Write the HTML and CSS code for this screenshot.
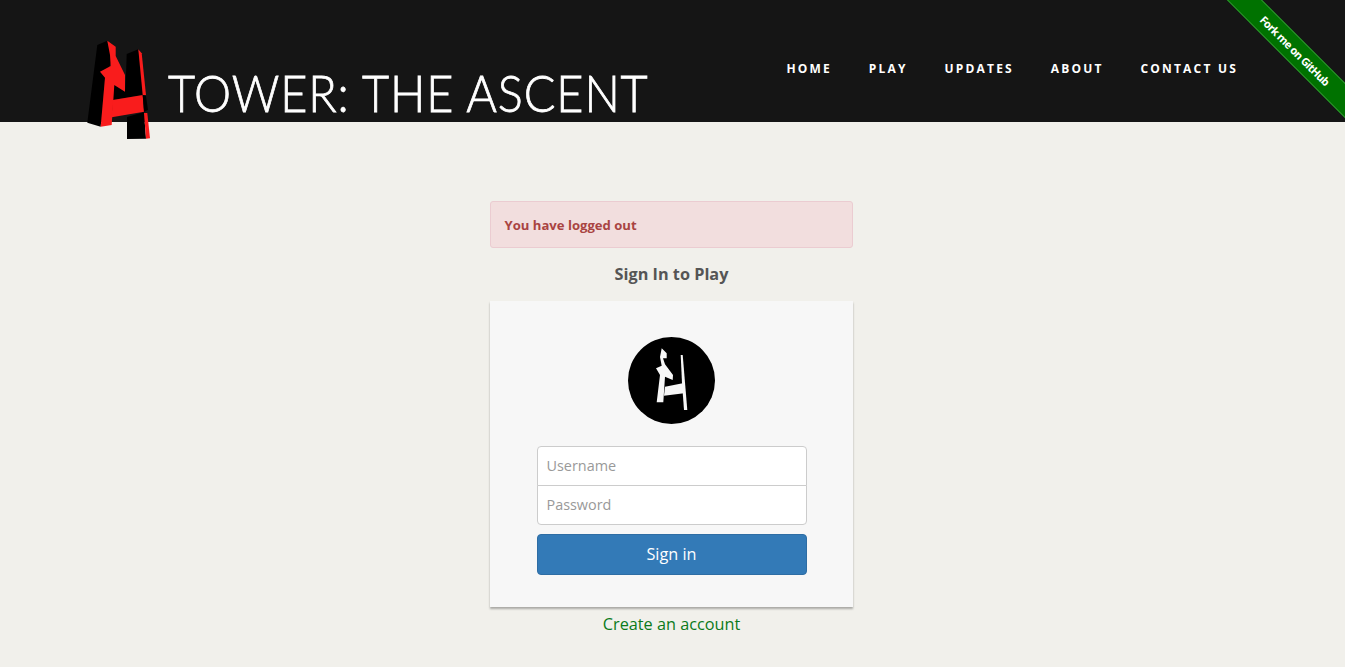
FILE: index.html
```html
<!DOCTYPE html>
<html lang="en">
<head>
  <meta charset="UTF-8">
  <title>Tower: The Ascent</title>
  <link rel="stylesheet" href="styles.css">
</head>
<body>
  <header class="topbar">
    <a class="brand" href="#">
      <svg class="brand-logo" viewBox="85 40 66 100" width="66" height="100">
        <polygon fill="#000" points="97.3,45 107.3,40.7 112,60 105,78 100.7,126.7 87.3,122.7"/>
        <polygon fill="#000" points="126.7,54 138.3,49.3 144,95 112.7,100 114.3,85 125,91.7 126,75"/>
        <polygon fill="#000" points="127,117 144,112 146,138.7 127,139"/>
        <polygon fill="#f91c1c" points="107.3,40.7 115.7,46.7 115.7,56 125,75 125,91.7 114.3,85 111.7,125 100.7,126.7 105,77.7 100,71.7 110.7,66 110,55"/>
        <polygon fill="#f91c1c" points="112.7,100 142.7,95 144,111.7 111.7,117.3"/>
        <polygon fill="#f91c1c" points="138.3,49.3 141.7,53.3 146,95 142.7,95"/>
        <polygon fill="#f91c1c" points="144,113 147.3,113 150,138.3 146,138.7"/>
        <polygon fill="#000" points="142.7,95 146,96 148,110 144,111.7"/>
      </svg>
      <span class="brand-name">TOWER: THE ASCENT</span>
    </a>
    <nav class="nav">
      <a href="#">HOME</a>
      <a href="#">PLAY</a>
      <a href="#">UPDATES</a>
      <a href="#">ABOUT</a>
      <a href="#">CONTACT US</a>
    </nav>
  </header>

  <a class="ribbon" href="#">Fork me on GitHub</a>

  <main class="login">
    <div class="alert">You have logged out</div>
    <h2>Sign In to Play</h2>
    <div class="card">
      <svg class="avatar" viewBox="0 0 87 87" width="87" height="87">
        <circle cx="43.5" cy="43.5" r="43.5" fill="#000"/>
        <polygon fill="#f7f7f7" points="33.7,11.3 38.7,16.3 38.7,21.3 35,21.3 37,27.3 45,38 44.7,43 37,39.7 35.3,65.3 28.7,65.3 32,38 28,31.3 33.7,28.7 32,20"/>
        <polygon fill="#f7f7f7" points="37,49.7 54.7,46.3 56,56.3 36,58.7"/>
        <polygon fill="#f7f7f7" points="52.7,18 54.7,18 59.3,73 56,73 54,46"/>
      </svg>
      <form class="signin">
        <input type="text" placeholder="Username">
        <input type="password" placeholder="Password">
        <button type="button">Sign in</button>
      </form>
    </div>
    <a class="create" href="#">Create an account</a>
  </main>
</body>
</html>
```

FILE: styles.css
```css
* {
  box-sizing: border-box;
  margin: 0;
  padding: 0;
}

html, body {
  height: 100%;
  overflow: hidden;
}

body {
  font-family: 'Open Sans', sans-serif;
  background: #f1f0eb;
  color: #4a4a4a;
}

a {
  text-decoration: none;
}

.topbar {
  display: flex;
  align-items: flex-start;
  justify-content: space-between;
  height: 122px;
  padding: 0 107px 0 85px;
  background-color: #151515;
}

.brand {
  display: flex;
  align-items: flex-start;
  gap: 17px;
  padding-top: 40px;
}

.brand-logo {
  display: block;
  flex: none;
}

.brand-name {
  width: 479px;
  margin-top: 21px;
  font-family: 'Lato', sans-serif;
  font-size: 52px;
  font-weight: 300;
  line-height: 62px;
  letter-spacing: 1px;
  white-space: nowrap;
  color: #fff;
  -webkit-text-stroke: 0.8px #fff;
  transform: scaleX(0.9);
  transform-origin: left center;
}

.nav {
  display: flex;
  gap: 36.8px;
  padding-top: 60px;
}

.nav a {
  font-size: 12px;
  font-weight: 700;
  line-height: 17px;
  letter-spacing: 2.2px;
  color: #fff;
}

.ribbon {
  position: absolute;
  top: 38px;
  left: 1195px;
  width: 200px;
  height: 25px;
  transform: rotate(45deg);
  background: #007200;
  border-top: 1px solid #2f8f2f;
  border-bottom: 1px solid #2f8f2f;
  font-size: 11px;
  font-weight: 700;
  letter-spacing: -0.6px;
  line-height: 23px;
  text-align: center;
  color: #fff;
}

.login {
  display: flex;
  flex-direction: column;
  align-items: center;
  width: 363px;
  margin: 79px 492px 0 490px;
}

.alert {
  width: 100%;
  height: 47px;
  padding: 0 13.5px;
  background: #f2dede;
  border: 1px solid #ebccd1;
  border-radius: 3px;
  font-size: 13.1px;
  font-weight: 700;
  line-height: 46px;
  color: #a94442;
}

h2 {
  margin: 15px 0 16px;
  font-size: 16.25px;
  font-weight: 700;
  line-height: 22px;
  color: #555;
}

.card {
  display: flex;
  flex-direction: column;
  align-items: center;
  width: 100%;
  height: 306px;
  padding-top: 36px;
  background: #f7f7f7;
  box-shadow: 0 2px 2px rgba(0, 0, 0, 0.3);
}

.avatar {
  display: block;
  margin-bottom: 22px;
}

.signin {
  display: flex;
  flex-direction: column;
  width: 270px;
}

.signin input {
  width: 100%;
  height: 40px;
  padding: 0 9px 2px;
  background: #fff;
  border: 1px solid #ccc;
  font-family: inherit;
  font-size: 14.4px;
  color: #555;
}

.signin input::placeholder {
  color: #999;
}

.signin input:first-child {
  border-radius: 4px 4px 0 0;
}

.signin input:nth-child(2) {
  margin-top: -1px;
  border-radius: 0 0 4px 4px;
}

.signin button {
  height: 41px;
  margin-top: 9px;
  background-color: #337ab7;
  border: 1px solid #2e6da4;
  border-radius: 4px;
  font-family: inherit;
  font-size: 16.25px;
  line-height: 39px;
  color: #fff;
  cursor: pointer;
}

.create {
  margin-top: 6px;
  font-size: 16.25px;
  line-height: 22px;
  color: #0b7a1a;
}
```
